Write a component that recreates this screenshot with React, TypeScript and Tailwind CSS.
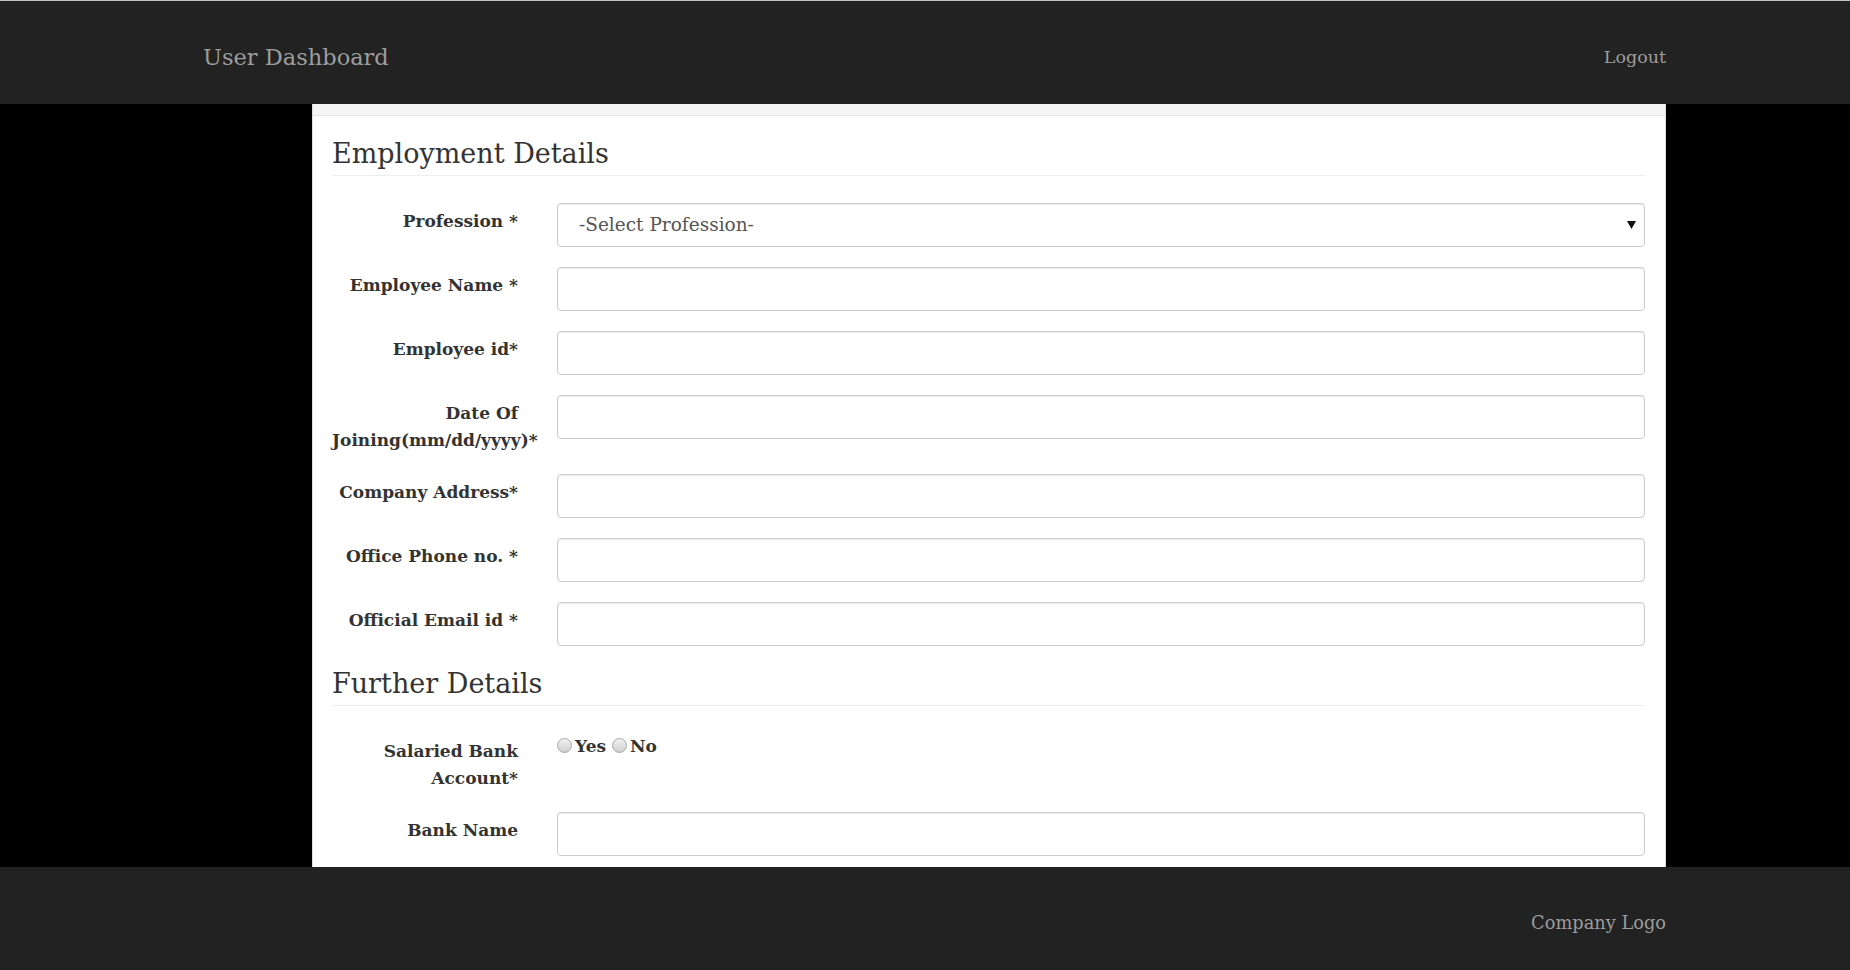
import React from 'react';

const serif = { fontFamily: '"DejaVu Serif", "Liberation Serif", serif' };

function Field({ label, children }: { label: React.ReactNode; children?: React.ReactNode }) {
  return (
    <div className="flex items-start mb-[20px]">
      <label className="w-[186px] shrink-0 text-right pt-[5px] leading-[27px] text-[17px] font-bold text-[#333]">
        {label}
      </label>
      <div className="ml-[39px] flex-1">{children}</div>
    </div>
  );
}

function TextInput() {
  return (
    <input
      type="text"
      className="block w-full h-[44px] rounded-[4px] border border-[#ccc] bg-white px-[12px] text-[17px] text-[#555] shadow-[inset_0_1px_1px_rgba(0,0,0,0.075)] outline-none"
    />
  );
}

function Heading({ children }: { children: React.ReactNode }) {
  return (
    <h3 className="mt-[23px] mb-[27px] pb-[6px] border-b border-[#eee] text-[27px] leading-[30px] font-normal text-[#333]">
      {children}
    </h3>
  );
}

function Radio({ text }: { text: string }) {
  return (
    <span className="inline-flex items-start">
      <span className="mt-[5px] w-[15px] h-[15px] rounded-full border border-[#a8a8a8] bg-gradient-to-b from-[#f2f2f2] to-[#cfcfcf]" />
      <span className="ml-[3px] text-[17px] font-bold text-[#333] leading-[27px]">{text}</span>
    </span>
  );
}

export default function App() {
  return (
    <div className="w-[1850px] h-[970px] flex flex-col bg-black border-t border-[#c4c4c4] overflow-hidden" style={serif}>
      <nav className="h-[103px] shrink-0 bg-[#222] flex items-center justify-between pl-[203px] pr-[184px] pt-[11px]">
        <span className="text-[22.5px] text-[#9d9d9d]">User Dashboard</span>
        <a className="text-[17.5px] text-[#9d9d9d] -mt-[2px]">Logout</a>
      </nav>

      <main className="flex-1 overflow-hidden">
        <div className="ml-[312px] w-[1354px] h-full bg-white border-x border-[#ddd]">
          <div className="h-[12px] bg-[#f5f5f5] border-b border-[#e3e3e3]" />
          <div className="pl-[19px] pr-[20px]">
            <Heading>Employment Details</Heading>

            <Field label="Profession *">
              <div className="flex items-center justify-between w-full h-[44px] rounded-[4px] border border-[#ccc] bg-white pl-[21px] pr-[8px] shadow-[inset_0_1px_1px_rgba(0,0,0,0.075)]">
                <span className="text-[18.5px] text-[#555]">-Select Profession-</span>
                <svg width="9" height="8" viewBox="0 0 9 8">
                  <path d="M0 0 H9 L4.5 8 Z" fill="#111" />
                </svg>
              </div>
            </Field>
            <Field label="Employee Name *">
              <TextInput />
            </Field>
            <Field label="Employee id*">
              <TextInput />
            </Field>
            <Field label="Date Of Joining(mm/dd/yyyy)*">
              <TextInput />
            </Field>
            <Field label="Company Address*">
              <TextInput />
            </Field>
            <Field label="Office Phone no. *">
              <TextInput />
            </Field>
            <Field label="Official Email id *">
              <TextInput />
            </Field>

            <Heading>Further Details</Heading>

            <Field label="Salaried Bank Account*">
              <div className="flex items-start">
                <Radio text="Yes" />
                <span className="w-[6px]" />
                <Radio text="No" />
              </div>
            </Field>
            <Field label="Bank Name">
              <TextInput />
            </Field>
          </div>
        </div>
      </main>

      <footer className="h-[103px] shrink-0 bg-[#222] flex items-center justify-end pr-[184px] pt-[9px]">
        <span className="text-[17.8px] text-[#9d9d9d]">Company Logo</span>
      </footer>
    </div>
  );
}
